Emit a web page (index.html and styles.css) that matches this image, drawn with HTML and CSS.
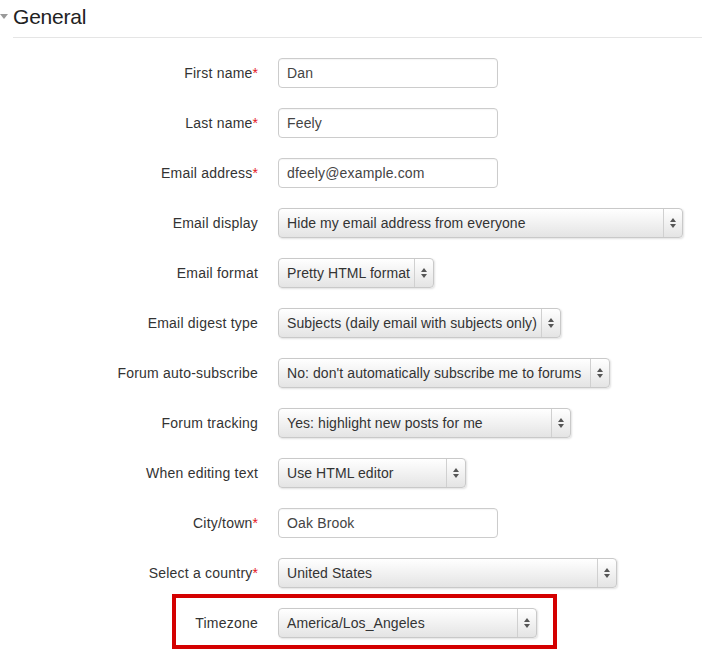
FILE: index.html
```html
<!DOCTYPE html>
<html>
<head>
<meta charset="utf-8">
<link rel="stylesheet" href="styles.css">
</head>
<body>
<div class="legend">
  <span class="caret"></span>
  <h2 class="legend-title">General</h2>
</div>
<form class="form">
  <label class="lbl">First name<span class="req">*</span></label>
  <div class="ctl"><div class="input">Dan</div></div>

  <label class="lbl">Last name<span class="req">*</span></label>
  <div class="ctl"><div class="input">Feely</div></div>

  <label class="lbl">Email address<span class="req">*</span></label>
  <div class="ctl"><div class="input">dfeely@example.com</div></div>

  <label class="lbl">Email display</label>
  <div class="ctl"><div class="select w-display"><span class="sel-text">Hide my email address from everyone</span><span class="sel-arrow"><i class="up"></i><i class="down"></i></span></div></div>

  <label class="lbl">Email format</label>
  <div class="ctl"><div class="select w-format"><span class="sel-text">Pretty HTML format</span><span class="sel-arrow"><i class="up"></i><i class="down"></i></span></div></div>

  <label class="lbl">Email digest type</label>
  <div class="ctl"><div class="select w-digest"><span class="sel-text">Subjects (daily email with subjects only)</span><span class="sel-arrow"><i class="up"></i><i class="down"></i></span></div></div>

  <label class="lbl">Forum auto-subscribe</label>
  <div class="ctl"><div class="select w-auto"><span class="sel-text">No: don't automatically subscribe me to forums</span><span class="sel-arrow"><i class="up"></i><i class="down"></i></span></div></div>

  <label class="lbl">Forum tracking</label>
  <div class="ctl"><div class="select w-track"><span class="sel-text">Yes: highlight new posts for me</span><span class="sel-arrow"><i class="up"></i><i class="down"></i></span></div></div>

  <label class="lbl">When editing text</label>
  <div class="ctl"><div class="select w-edit"><span class="sel-text">Use HTML editor</span><span class="sel-arrow"><i class="up"></i><i class="down"></i></span></div></div>

  <label class="lbl">City/town<span class="req">*</span></label>
  <div class="ctl"><div class="input">Oak Brook</div></div>

  <label class="lbl">Select a country<span class="req">*</span></label>
  <div class="ctl"><div class="select w-country"><span class="sel-text">United States</span><span class="sel-arrow"><i class="up"></i><i class="down"></i></span></div></div>

  <label class="lbl">Timezone</label>
  <div class="ctl highlight"><div class="select w-tz"><span class="sel-text">America/Los_Angeles</span><span class="sel-arrow"><i class="up"></i><i class="down"></i></span></div></div>
</form>
</body>
</html>
```
FILE: styles.css
```css
html, body {
  margin: 0;
  padding: 0;
  background: #fff;
}
body {
  font-family: "Liberation Sans", Arial, Helvetica, sans-serif;
  font-size: 14px;
  color: #333;
  width: 702px;
  height: 650px;
  overflow: hidden;
}
.legend {
  display: flex;
  align-items: flex-start;
}
.caret {
  width: 0;
  height: 0;
  margin-top: 14px;
  margin-right: 5px;
  border-left: 4px solid transparent;
  border-right: 4px solid transparent;
  border-top: 5px solid #9a9a9a;
}
.legend-title {
  flex: 1;
  margin: 0;
  font-weight: normal;
  font-size: 21px;
  line-height: 26px;
  letter-spacing: -0.2px;
  color: #222;
  padding: 4px 0 7px 0;
  border-bottom: 1px solid #e5e5e5;
}
.form {
  display: grid;
  grid-template-columns: 258px 1fr;
  column-gap: 20px;
  row-gap: 20px;
  align-items: center;
  margin-top: 20px;
}
.lbl {
  text-align: right;
  line-height: 20px;
  color: #333;
  white-space: nowrap;
  letter-spacing: 0.22px;
}
.req {
  color: #e3161b;
  letter-spacing: 0;
}
.ctl {
  display: flex;
  position: relative;
}
.input {
  box-sizing: border-box;
  width: 220px;
  height: 30px;
  border: 1px solid #cccccc;
  border-radius: 4px;
  padding: 0 8px;
  line-height: 28px;
  color: #444;
  letter-spacing: 0.15px;
  box-shadow: inset 0 1px 1px rgba(0,0,0,0.04);
}
.select {
  box-sizing: border-box;
  height: 30px;
  display: flex;
  align-items: stretch;
  border: 1px solid #c9c9c9;
  border-radius: 4px;
  background: linear-gradient(#ffffff, #f3f3f3 45%, #e4e4e4);
  box-shadow: 1px 1px 2px rgba(0,0,0,0.12);
  color: #333;
}
.sel-text {
  flex: 1;
  min-width: 0;
  padding-left: 8px;
  line-height: 28px;
  white-space: nowrap;
  letter-spacing: 0.08px;
}
.sel-arrow {
  flex: none;
  width: 18px;
  border-left: 1px solid #d0d0d0;
  display: flex;
  flex-direction: column;
  align-items: center;
  justify-content: center;
  gap: 2px;
}
.up, .down {
  display: block;
  width: 0;
  height: 0;
  border-left: 3px solid transparent;
  border-right: 3px solid transparent;
}
.up { border-bottom: 4px solid #555; }
.down { border-top: 4px solid #555; }
.w-display { width: 405px; }
.w-format { width: 156px; }
.w-digest { width: 283px; }
.w-auto { width: 332px; }
.w-track { width: 293px; }
.w-edit { width: 188px; }
.w-country { width: 339px; }
.w-tz { width: 259px; }
.highlight::after {
  content: "";
  position: absolute;
  left: -106px;
  top: -14px;
  width: 377px;
  height: 47px;
  border: 4px solid #d40000;
  pointer-events: none;
}
```
